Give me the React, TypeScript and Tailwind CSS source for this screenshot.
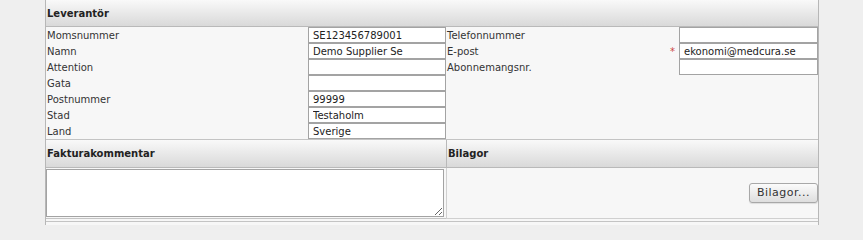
import React from "react";

const rows: { label: string; value: string; label2?: string; value2?: string; required?: boolean }[] = [
  { label: "Momsnummer", value: "SE123456789001", label2: "Telefonnummer", value2: "" },
  { label: "Namn", value: "Demo Supplier Se", label2: "E-post", value2: "ekonomi@medcura.se", required: true },
  { label: "Attention", value: "", label2: "Abonnemangsnr.", value2: "" },
  { label: "Gata", value: "" },
  { label: "Postnummer", value: "99999" },
  { label: "Stad", value: "Testaholm" },
  { label: "Land", value: "Sverige" },
];

function Field({ value }: { value: string }) {
  return (
    <input
      readOnly
      defaultValue={value}
      className="block h-4 w-full border border-[#a3a3a3] bg-white px-[4px] text-[10px] leading-[14px] text-[#222] outline-none"
    />
  );
}

export default function App() {
  return (
    <main className="min-h-screen bg-[#efefef] font-['DejaVu_Sans',Verdana,sans-serif] text-[10px] text-[#333]">
      <div className="ml-[45px] w-[774px] border-x border-[#b7b7b7] bg-[#f7f7f7]">
        {/* Leverantör */}
        <div className="flex h-[27px] items-center border-b border-[#b9b9b9] bg-gradient-to-b from-[#f9f9f9] to-[#d9d9d9] pl-px font-bold text-[#222]">
          Leverantör
        </div>
        <div className="grid grid-cols-[262px_138px_233px_139px]">
          {rows.map((r) => (
            <React.Fragment key={r.label}>
              <div className="flex h-4 items-center pl-px">{r.label}</div>
              <Field value={r.value} />
              <div className="flex h-4 items-center justify-between pl-px pr-[4px]">
                <span>{r.label2 ?? ""}</span>
                {r.required && <span className="text-[#c44]">*</span>}
              </div>
              {r.label2 ? <Field value={r.value2 ?? ""} /> : <div />}
            </React.Fragment>
          ))}
        </div>

        {/* Fakturakommentar / Bilagor */}
        <div className="grid grid-cols-[400px_372px] border-t border-[#c4c4c4]">
          <div className="flex h-[28px] items-center border-b border-[#b9b9b9] bg-gradient-to-b from-[#f9f9f9] to-[#d9d9d9] pl-px font-bold text-[#222]">
            Fakturakommentar
          </div>
          <div className="flex h-[28px] items-center border-b border-l border-[#b9b9b9] bg-gradient-to-b from-[#f9f9f9] to-[#d9d9d9] pl-px font-bold text-[#222]">
            Bilagor
          </div>
          <div className="h-[51px] border-b border-[#c4c4c4] pt-px">
            <textarea className="block h-[48px] w-[398px] border border-[#a3a3a3] bg-white text-[10px] outline-none" />
          </div>
          <div className="flex h-[51px] items-center justify-end border-b border-l border-[#d0d0d0]">
            <button className="h-[20px] w-[69px] rounded-[3px] border border-[#a8a8a8] bg-gradient-to-b from-[#fbfbfb] to-[#dedede] text-[11px] tracking-[0.5px] text-[#333] shadow-[0_1px_1px_rgba(0,0,0,0.1)]">
              Bilagor...
            </button>
          </div>
        </div>
        <div className="mt-[2px] h-[4px] border-t border-[#c4c4c4] bg-[#f7f7f7]" />
      </div>
    </main>
  );
}
